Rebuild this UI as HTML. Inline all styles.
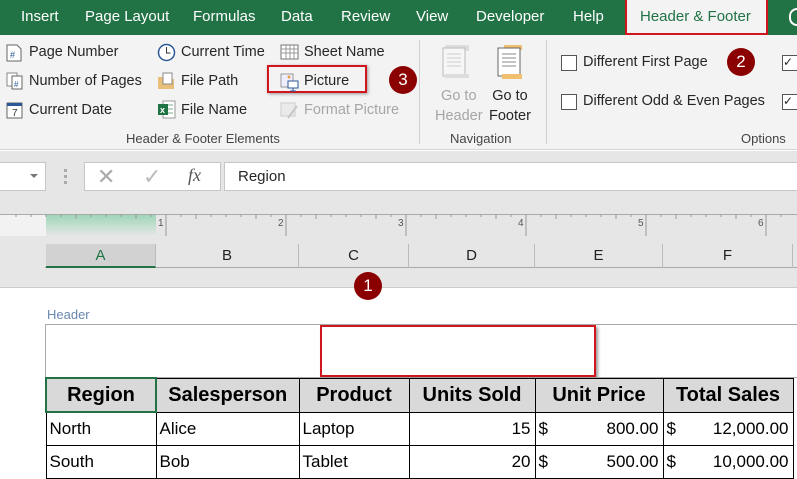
<!DOCTYPE html>
<html><head><style>
*{margin:0;padding:0;box-sizing:border-box}
body{width:797px;height:473px;overflow:hidden;position:relative;background:#fff;font-family:"Segoe UI","Liberation Sans",sans-serif;color:#262626}
.a{position:absolute}
.tab{position:absolute;top:8px;font-size:15px;color:#fff}
.rb{position:absolute;font-size:14.5px;color:#262626;white-space:nowrap}
.badge{position:absolute;width:28px;height:28px;border-radius:50%;background:#8b0000;color:#fff;font-size:17px;text-align:center;line-height:28px}
.chk{position:absolute;width:16px;height:16px;border:1px solid #555;background:#fff}
.col{position:absolute;top:244px;height:24px;border-right:1px solid #bbb;font-size:15px;text-align:center;line-height:24px;color:#222}
table{position:absolute;left:45px;top:377px;border-collapse:collapse;font-family:"Liberation Sans",Arial,sans-serif;font-size:17px;color:#000}
td{border:1px solid #000;height:33px;padding:0 4px 0 3px}
th{border:1px solid #000;background:#d9d9d9;height:34px;font-size:20px;font-weight:bold}
</style></head><body>
<div class="a" style="left:0;top:0;width:797px;height:35px;background:#217346"></div>
<div class="tab" style="left:21px">Insert</div>
<div class="tab" style="left:85px">Page Layout</div>
<div class="tab" style="left:193px">Formulas</div>
<div class="tab" style="left:281px">Data</div>
<div class="tab" style="left:341px">Review</div>
<div class="tab" style="left:416px">View</div>
<div class="tab" style="left:476px">Developer</div>
<div class="tab" style="left:573px">Help</div>
<div class="a" style="left:625px;top:0;width:143px;height:35px;background:#f3f3f3;border:2px solid #d0161c;border-top:none"></div>
<div class="tab" style="left:640px;color:#217346">Header &amp; Footer</div>
<div class="a" style="left:789px;top:8px;width:9px;height:18px;border:2px solid #fff;border-radius:8px 0 0 8px;border-right:none"></div>
<div class="a" style="left:0;top:35px;width:797px;height:115px;background:#f3f3f3;border-bottom:1px solid #d4d4d4"></div>
<svg class="a" style="left:6px;top:44px" width="16" height="18"><path d="M1 1h10l4 4v12H1z" fill="#fff" stroke="#666"/><text x="4" y="14" font-size="9" fill="#2b5797">#</text></svg>
<div class="rb" style="left:29px;top:44px">Page Number</div>
<svg class="a" style="left:6px;top:72px" width="18" height="18"><rect x="1" y="1" width="10" height="13" fill="#fff" stroke="#888"/><rect x="6" y="4" width="10" height="13" fill="#fff" stroke="#666"/><text x="8" y="15" font-size="8" fill="#2b5797">#</text></svg>
<div class="rb" style="left:29px;top:73px">Number of Pages</div>
<svg class="a" style="left:6px;top:101px" width="18" height="18"><rect x="1" y="2" width="15" height="15" fill="#fff" stroke="#666"/><rect x="1" y="2" width="15" height="3" fill="#2b5797"/><text x="6" y="15" font-size="10" fill="#333">7</text></svg>
<div class="rb" style="left:29px;top:102px">Current Date</div>
<svg class="a" style="left:157px;top:43px" width="19" height="19"><circle cx="9.5" cy="9.5" r="8" fill="#fff" stroke="#2b5797" stroke-width="1.5"/><path d="M9.5 4v6h4" stroke="#333" fill="none"/></svg>
<div class="rb" style="left:181px;top:44px">Current Time</div>
<svg class="a" style="left:157px;top:72px" width="19" height="18"><path d="M1 5h6l2 2h8v10H1z" fill="#e8c07a"/><rect x="6" y="1" width="9" height="11" fill="#fff" stroke="#888"/></svg>
<div class="rb" style="left:181px;top:73px">File Path</div>
<svg class="a" style="left:157px;top:100px" width="19" height="19"><rect x="6" y="1" width="12" height="17" fill="#fff" stroke="#999"/><path d="M9 5h7M9 9h7M9 13h7" stroke="#7bb28f"/><rect x="1" y="4" width="10" height="11" fill="#1f7244"/><text x="3" y="13" font-size="9" fill="#fff" font-weight="bold">x</text></svg>
<div class="rb" style="left:181px;top:102px">File Name</div>
<svg class="a" style="left:280px;top:44px" width="19" height="17"><rect x="1" y="1" width="17" height="14" fill="#fff" stroke="#777"/><path d="M1 5h17M1 9h17M6 1v14M10 1v14M14 1v14" stroke="#999"/></svg>
<div class="rb" style="left:304px;top:44px">Sheet Name</div>
<div class="a" style="left:267px;top:65px;width:100px;height:28px;border:2px solid #d0161c;box-shadow:1px 1px 3px #999"></div>
<svg class="a" style="left:280px;top:72px" width="20" height="20"><rect x="1" y="2" width="12" height="13" fill="#eef" stroke="#999"/><circle cx="9" cy="5" r="1.5" fill="#e8a040"/><rect x="8" y="9" width="10" height="7" fill="#fff" stroke="#2b5797"/><path d="M13 16v3M10 19h6" stroke="#2b5797"/></svg>
<div class="rb" style="left:304px;top:73px">Picture</div>
<svg class="a" style="left:280px;top:101px" width="19" height="18" opacity=".4"><rect x="1" y="2" width="14" height="13" fill="#ddd" stroke="#999"/><path d="M8 17l9-12" stroke="#888" stroke-width="2"/></svg>
<div class="rb" style="left:304px;top:102px;color:#a6a6a6">Format Picture</div>
<div class="badge" style="left:389px;top:66px">3</div>
<div class="rb" style="left:126px;top:131px;font-size:13px;color:#444">Header &amp; Footer Elements</div>
<div class="a" style="left:419px;top:40px;width:1px;height:104px;background:#d0d0d0"></div>
<svg class="a" style="left:441px;top:44px" width="30" height="36"><rect x="4" y="1" width="24" height="6" fill="#ddd"/><rect x="2" y="4" width="22" height="28" fill="#f6f6f6" stroke="#bbb"/><path d="M6 10h14M6 14h14M6 18h14M6 22h14" stroke="#ccc"/><rect x="4" y="30" width="24" height="4" fill="#ddd"/></svg>
<div class="rb" style="left:435px;top:86px;color:#a6a6a6;line-height:20px;text-align:center">Go to<br>Header</div>
<svg class="a" style="left:496px;top:44px" width="30" height="36"><rect x="8" y="1" width="18" height="5" fill="#f0c070"/><rect x="2" y="4" width="22" height="28" fill="#fff" stroke="#666"/><path d="M6 10h14M6 14h14M6 18h14M6 22h14" stroke="#888"/><rect x="6" y="30" width="20" height="5" fill="#f0c070"/></svg>
<div class="rb" style="left:489px;top:86px;line-height:20px;text-align:center">Go to<br>Footer</div>
<div class="rb" style="left:450px;top:131px;font-size:13px;color:#444">Navigation</div>
<div class="a" style="left:546px;top:40px;width:1px;height:104px;background:#d0d0d0"></div>
<div class="chk" style="left:561px;top:55px"></div>
<div class="rb" style="left:583px;top:54px">Different First Page</div>
<div class="chk" style="left:561px;top:94px"></div>
<div class="rb" style="left:583px;top:93px">Different Odd &amp; Even Pages</div>
<div class="badge" style="left:727px;top:48px">2</div>
<div class="chk" style="left:782px;top:55px;font-size:12px;line-height:13px">✓</div>
<div class="chk" style="left:782px;top:94px;font-size:12px;line-height:13px">✓</div>
<div class="rb" style="left:741px;top:131px;font-size:13px;color:#444">Options</div>
<div class="a" style="left:0;top:151px;width:797px;height:137px;background:#e6e6e6;border-bottom:1px solid #ccc"></div>
<div class="a" style="left:0;top:162px;width:46px;height:29px;background:#fff;border:1px solid #c6c6c6;border-left:none"></div>
<div class="a" style="left:30px;top:174px;border:4px solid transparent;border-top:4px solid #777"></div>
<div class="a" style="left:64px;top:169px;width:3px;height:15px;border-left:3px dotted #aaa"></div>
<div class="a" style="left:84px;top:162px;width:137px;height:29px;background:#fff;border:1px solid #c6c6c6"></div>
<div class="a" style="left:97px;top:164px;font-size:22px;color:#aaa">✕</div>
<div class="a" style="left:143px;top:164px;font-size:22px;color:#bbb">✓</div>
<div class="a" style="left:188px;top:165px;font-size:18px;font-style:italic;font-family:'Liberation Serif',serif;color:#555">fx</div>
<div class="a" style="left:224px;top:162px;width:573px;height:29px;background:#fff;border:1px solid #c6c6c6;border-right:none"></div>
<div class="rb" style="left:238px;top:168px;font-size:15px">Region</div>
<div class="a" style="left:0;top:214px;width:797px;height:22px;background:#e6e6e6;border-top:1px solid #aaa"></div>
<div class="a" style="left:0;top:215px;width:46px;height:21px;background:#f2f2f2"></div>
<div class="a" style="left:46px;top:215px;width:110px;height:21px;background:linear-gradient(#9fd6b8,#e6e6e6)"></div>
<svg class="a" style="left:0;top:214px" width="797" height="24">
<g stroke="#999">
<path d="M16 0v3M31 0v3M46 0v3M76 0v5M106 0v3M136 0v5M196 0v5M226 0v3M256 0v5M316 0v5M346 0v3M376 0v5M436 0v5M466 0v3M496 0v5M556 0v5M586 0v3M616 0v5M676 0v5M706 0v3M736 0v5M61 0v3M91 0v3M121 0v3M151 0v3M181 0v3M211 0v3M241 0v3M271 0v3M301 0v3M331 0v3M361 0v3M391 0v3M421 0v3M451 0v3M481 0v3M511 0v3M541 0v3M571 0v3M601 0v3M631 0v3M661 0v3M691 0v3M721 0v3M751 0v3M781 0v3"/>
<path d="M166 0v22M286 0v22M406 0v22M526 0v22M646 0v22M766 0v22"/></g>
<g font-size="10" fill="#555" font-family="Liberation Sans"><text x="158" y="12">1</text><text x="278" y="12">2</text><text x="398" y="12">3</text><text x="518" y="12">4</text><text x="638" y="12">5</text><text x="758" y="12">6</text></g></svg>
<div class="a" style="left:45px;top:267px;width:752px;height:1px;background:#aaa"></div>
<div class="col" style="left:46px;width:110px;background:#d2d2d2;border-bottom:2px solid #217346;color:#217346">A</div>
<div class="col" style="left:156px;width:143px">B</div>
<div class="col" style="left:299px;width:110px">C</div>
<div class="col" style="left:409px;width:126px">D</div>
<div class="col" style="left:535px;width:128px">E</div>
<div class="col" style="left:663px;width:130px">F</div>
<div class="badge" style="left:354px;top:272px">1</div>
<div class="a" style="left:47px;top:307px;font-size:13px;color:#6a88b0">Header</div>
<div class="a" style="left:45px;top:324px;width:752px;height:54px;border:1px solid #aaa;border-right:none"></div>
<div class="a" style="left:320px;top:325px;width:276px;height:52px;border:2px solid #d0161c;box-shadow:2px 2px 3px #999;background:#fff"></div>
<table>
<tr><th style="width:110px;border:2px solid #217346">Region</th><th style="width:143px">Salesperson</th><th style="width:110px">Product</th><th style="width:126px">Units Sold</th><th style="width:128px">Unit Price</th><th style="width:130px">Total Sales</th></tr>
<tr><td>North</td><td>Alice</td><td>Laptop</td><td style="text-align:right">15</td><td>$<span style="float:right">800.00</span></td><td>$<span style="float:right">12,000.00</span></td></tr>
<tr><td>South</td><td>Bob</td><td>Tablet</td><td style="text-align:right">20</td><td>$<span style="float:right">500.00</span></td><td>$<span style="float:right">10,000.00</span></td></tr>
</table>
</body></html>
